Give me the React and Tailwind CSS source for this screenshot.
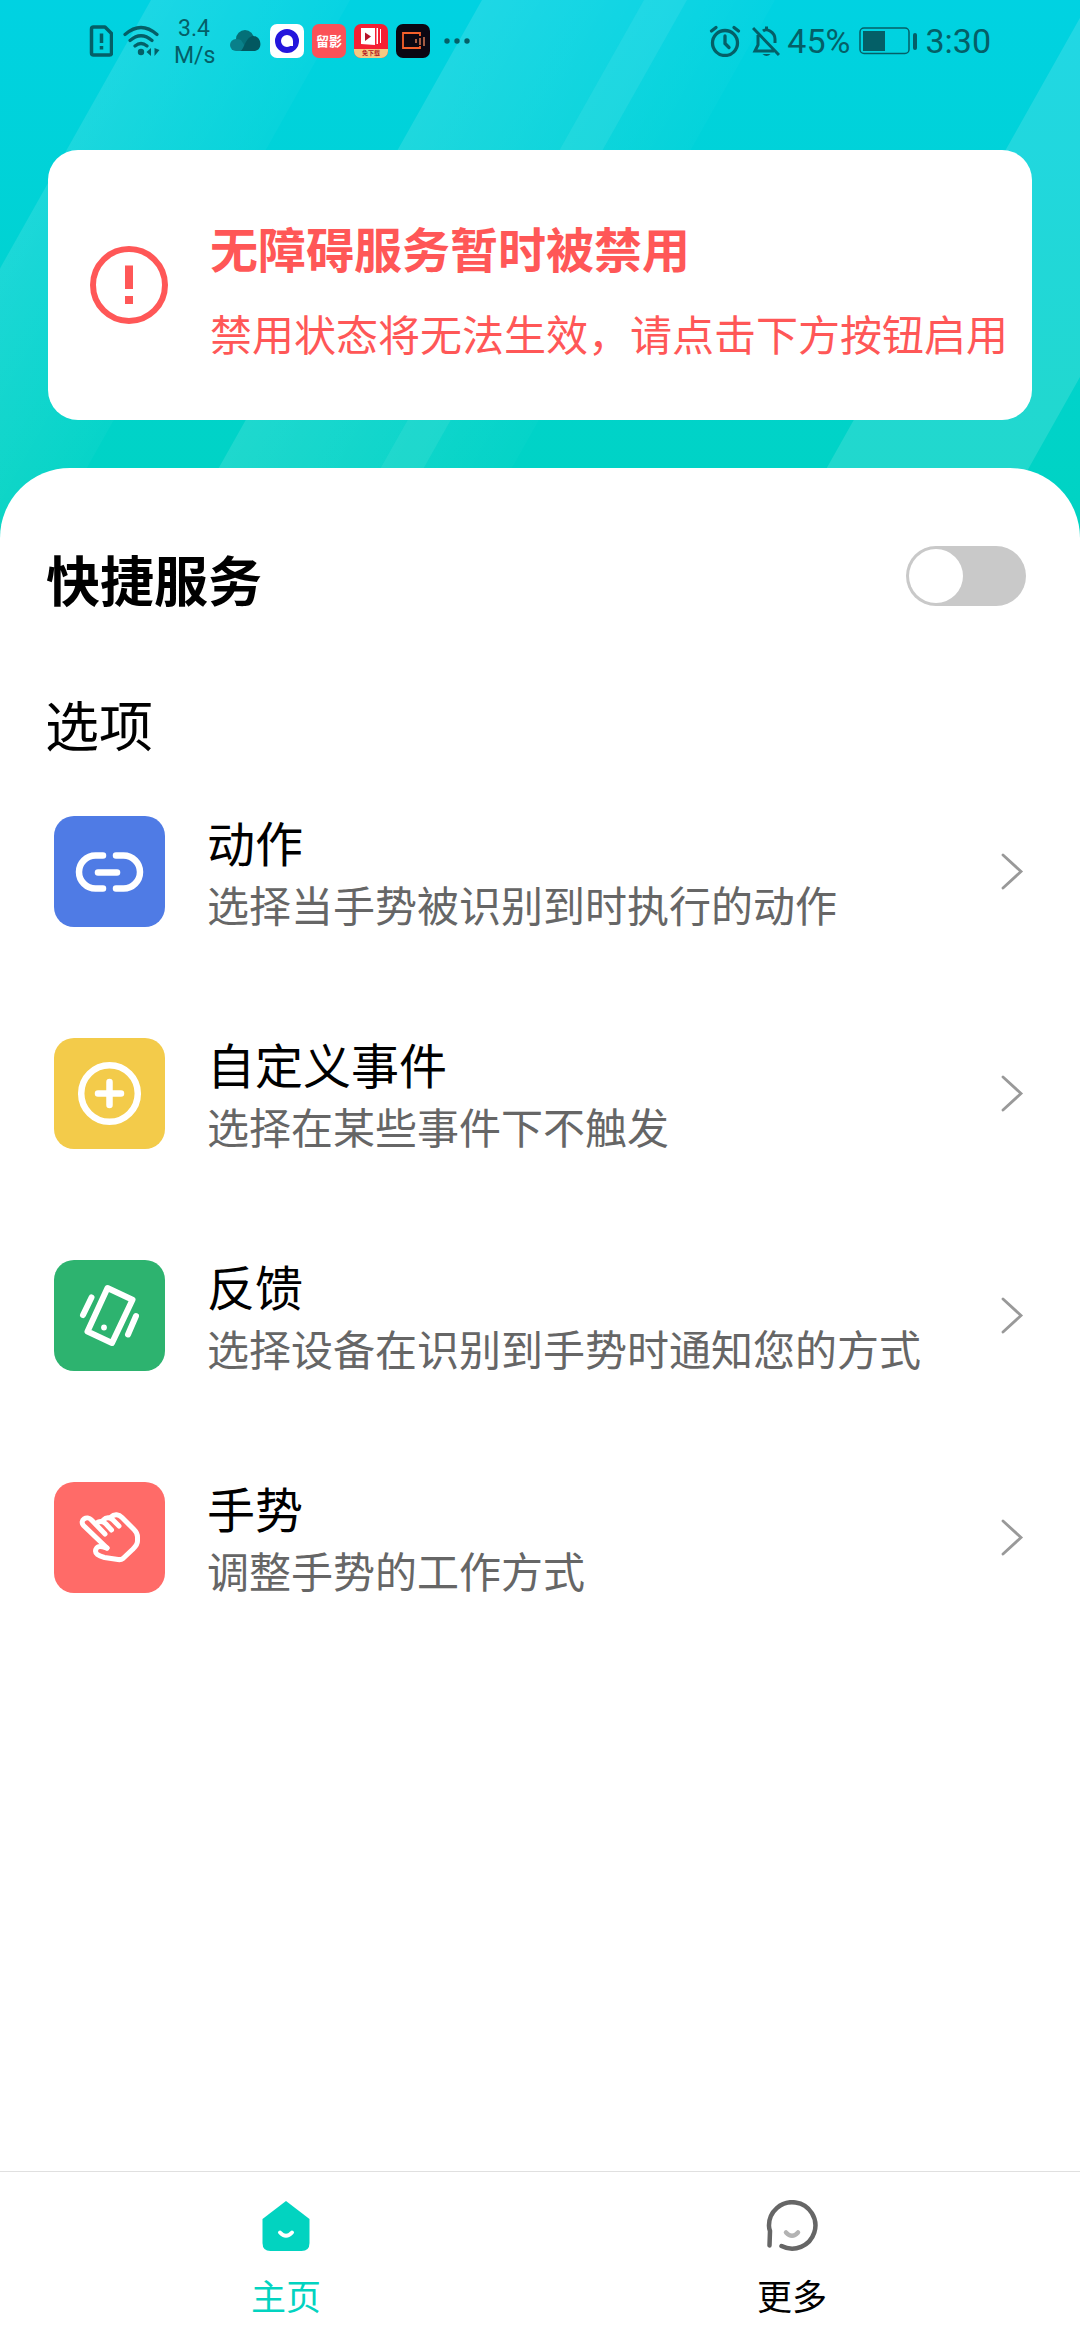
import { useState } from 'react';

const options = [
  { title: '动作', desc: '选择当手势被识别到时执行的动作', color: 'bg-[#4f7be5]', icon: LinkIcon },
  { title: '自定义事件', desc: '选择在某些事件下不触发', color: 'bg-[#f3cb4a]', icon: PlusIcon },
  { title: '反馈', desc: '选择设备在识别到手势时通知您的方式', color: 'bg-[#2db36f]', icon: VibrateIcon },
  { title: '手势', desc: '调整手势的工作方式', color: 'bg-[#ff6b68]', icon: HandIcon },
];

function LinkIcon() {
  return (
    <svg viewBox="0 0 111 111" className="size-full" fill="none" stroke="white" strokeWidth="6.5" strokeLinecap="round">
      <path d="M49 39.5H41.5a16.5 16.5 0 0 0 0 33H49" />
      <path d="M62 39.5H69.500a16.500 16.500 0 0 1 0 33H62" />
      <path d="M44 56.5H63" />
    </svg>
  );
}

function PlusIcon() {
  return (
    <svg viewBox="0 0 111 111" className="size-full" fill="none" stroke="white" strokeWidth="6.5" strokeLinecap="round">
      <circle cx="55.5" cy="55.5" r="28.3" />
      <path d="M44 55.5H67M55.5 44V67" />
    </svg>
  );
}

function VibrateIcon() {
  return (
    <svg viewBox="0 0 111 111" className="size-full" fill="none" stroke="white" strokeWidth="6" strokeLinecap="round" strokeLinejoin="round">
      <path d="M53.5 28L78.5 39.7L58 83L33.5 71.5Z" />
      <path d="M37.5 37.5L29 55M82 56L74 74.5" />
      <circle cx="50" cy="67.5" r="2.9" fill="white" stroke="none" />
    </svg>
  );
}

function HandIcon() {
  return (
    <svg viewBox="0 0 111 111" className="size-full" fill="none" stroke="white" strokeWidth="5" strokeLinecap="round" strokeLinejoin="round">
      <path d="M53 66L29.5 43.5C25 38 33 33 37.5 38L51 52" />
      <path d="M42 42C45 38.500 49 39 52 42L57.500 48" />
      <path d="M49.500 38C52.500 34.500 56.500 35.500 59 38L65 44" />
      <path d="M57 35C60.500 31.500 65 32.500 68 35.500L80 47.500Q83.500 51 83.500 55V59C83.500 63 81 65 78.500 67.500L69 76.500Q67 78 64 77.500L50.500 75.500C45 74 40 72 42 67C44 63 48 64.500 53 66" />
    </svg>
  );
}

function StatusBar() {
  return (
    <div className="flex h-20 items-center justify-between pl-[89px] pr-[89px] font-['Roboto'] text-[#045f67]">
      <div className="flex items-center pt-px">
        <svg className="h-8 w-6" viewBox="0 0 24 32" fill="none" stroke="currentColor" strokeWidth="3.5" strokeLinejoin="round">
          <path d="M4.5 2H16L22.5 8.500V28Q22.5 30 20.5 30H4.5Q2.5 30 2.5 28V4Q2.5 2 4.5 2Z" />
          <path d="M12.5 8.500V18M12.5 21V24.500" />
        </svg>
        <svg className="ml-[10px] h-8 w-[37px]" viewBox="0 0 37 32" fill="none" stroke="currentColor" strokeWidth="3.2" strokeLinecap="round">
          <path d="M2 9.5Q18 -4.5 34 9.5M7 15.500Q18 6 29 15.500M12 21Q18 16 24 21" />
          <circle cx="18" cy="27" r="3.2" fill="currentColor" stroke="none" />
          <path d="M28 23V31L23.5 27ZM31.5 23V31L36.5 25Z" fill="currentColor" stroke="none" />
        </svg>
        <div className="ml-[14px] w-10 pt-[3px] text-center text-[23px] leading-[27px]">
          <div>3.4</div>
          <div>M/s</div>
        </div>
        <svg className="ml-4 h-[22px] w-[31px]" viewBox="0 0 31 22">
          <circle cx="15" cy="9" r="9" fill="#047078" />
          <path d="M6 9a6 6 0 0 0 0 12H18L11 10Q9 9 6 9Z" fill="#09808a" />
          <path d="M10 21C14 21 15 7 23 6C32 6 33 20 25 21Z" fill="#025860" />
        </svg>
        <svg className="ml-[9px] size-[34px]" viewBox="0 0 34 34">
          <rect width="34" height="34" rx="7" fill="white" />
          <circle cx="17" cy="17" r="9" fill="none" stroke="#2416dc" strokeWidth="6" />
          <path d="M18 17H23V22H20Z" fill="white" />
        </svg>
        <div className="ml-2 flex size-[34px] items-center justify-center whitespace-nowrap rounded-[7px] bg-[#fb5157] font-['Noto_Sans_CJK_SC'] text-[13px] font-bold leading-none text-white">
          留影
        </div>
        <div className="ml-2 flex size-[34px] flex-col overflow-hidden rounded-[7px] bg-[#f51f32]">
          <svg className="h-[25px] w-[34px]" viewBox="0 0 34 25">
            <path d="M7 4H21V21L7 20ZM22.500 4H24V20H22.500ZM26 5H27V19H26Z" fill="white" />
            <path d="M11 8.500L17 12.500L11 17Z" fill="#b5132a" />
          </svg>
          <div className="h-[9px] bg-[#f4c982] text-center font-['Noto_Sans_CJK_SC'] text-[6px] font-bold leading-[8px] text-[#b51824]">
            免下载
          </div>
        </div>
        <svg className="ml-2 size-[34px]" viewBox="0 0 34 34" fill="none">
          <rect width="34" height="34" rx="7" fill="#0b0712" />
          <path d="M24 12V9H7V24H24V22" stroke="#f4602b" strokeWidth="1.8" />
          <path d="M20 15V19M24 14V21M28 13V22" stroke="#c9714f" strokeWidth="1.6" />
        </svg>
        <svg className="ml-[13px] h-2 w-7" viewBox="0 0 28 8" fill="currentColor">
          <circle cx="4" cy="4" r="2.7" />
          <circle cx="14" cy="4" r="2.7" />
          <circle cx="24" cy="4" r="2.7" />
        </svg>
      </div>
      <div className="flex items-center pt-px text-[34px] leading-10">
        <svg className="h-8 w-8" viewBox="0 0 32 32" fill="none" stroke="currentColor" strokeWidth="3.3" strokeLinecap="round">
          <circle cx="16" cy="18" r="12.5" />
          <path d="M16 11V18.500L20 22.500M2.5 6L7 2.5M29.5 6L25 2.5" />
        </svg>
        <svg className="ml-[11px] h-8 w-7" viewBox="0 0 28 32" fill="none" stroke="currentColor" strokeWidth="3">
          <path d="M6 10V20L3 26H22M11 6Q14 3.5 18 6Q23 9 23 14V18M14.5 5V1.5M1 3L27 30" />
          <path d="M10.5 29H18.5Q14.5 33 10.5 29Z" fill="currentColor" stroke="none" />
        </svg>
        <span className="ml-[7px] pt-px">45%</span>
        <svg className="ml-[9px] h-7 w-[59px]" viewBox="0 0 59 28" fill="currentColor">
          <rect x="1" y="1" width="49" height="25.5" rx="4" fill="none" stroke="currentColor" strokeWidth="1.5" />
          <rect x="4" y="4" width="22" height="20" />
          <rect x="54" y="6" width="4" height="17" rx="2" />
        </svg>
        <span className="ml-[7px] pt-px">3:30</span>
      </div>
    </div>
  );
}

function Stripes() {
  return (
    <svg className="absolute inset-0 h-[560px] w-[1080px]" viewBox="0 0 1080 560" fill="white">
      <defs>
        <linearGradient id="fade" x1="0" y1="0" x2="0" y2="1">
          <stop offset="0" stopColor="white" stopOpacity="0.1" />
          <stop offset="0.35" stopColor="white" stopOpacity="0.03" />
          <stop offset="0.6" stopColor="white" stopOpacity="0.06" />
          <stop offset="1" stopColor="white" stopOpacity="0.1" />
        </linearGradient>
        <linearGradient id="beam" gradientUnits="userSpaceOnUse" x1="482" y1="0" x2="775" y2="0" gradientTransform="skewX(-29.4)">
          <stop offset="0" stopColor="white" stopOpacity="0.12" />
          <stop offset="1" stopColor="white" stopOpacity="0.02" />
        </linearGradient>
        <linearGradient id="edge" gradientUnits="userSpaceOnUse" x1="151" y1="0" x2="350" y2="0" gradientTransform="skewX(-29.4)">
          <stop offset="0" stopColor="white" stopOpacity="0.11" />
          <stop offset="1" stopColor="white" stopOpacity="0.03" />
        </linearGradient>
      </defs>
      <path d="M151 0H350L35 560H-164Z" fill="url(#edge)" />
      <path d="M482 0H775L460 560H167Z" fill="url(#beam)" />
      <path d="M644 0H687L372 560H329Z" fillOpacity="0.07" />
      <path d="M1090 0H1292L977 560H775Z" fillOpacity="0.13" />
    </svg>
  );
}

function AlertCard() {
  return (
    <div className="mx-12 flex h-[270px] items-center rounded-[30px] bg-white text-[#ff5757]">
      <svg className="ml-[42px] size-[78px] shrink-0" viewBox="0 0 78 78" fill="none" stroke="currentColor">
        <circle cx="39" cy="39" r="36" strokeWidth="6" />
        <path d="M39 19.5V43M39 50V58" strokeWidth="8" />
      </svg>
      <div className="ml-[42px] whitespace-nowrap pt-1.5">
        <div className="text-[48px] font-bold leading-[70px]">无障碍服务暂时被禁用</div>
        <div className="mt-5 text-[42px] leading-[62px]">禁用状态将无法生效，请点击下方按钮启用</div>
      </div>
    </div>
  );
}

function OptionRow({ option }) {
  const Icon = option.icon;

  return (
    <div className="flex h-[222px] items-start pl-[54px] pr-[56px]">
      <div className={`size-[111px] shrink-0 overflow-hidden rounded-[20px] ${option.color}`}>
        <Icon />
      </div>
      <div className="ml-[42px] flex-1 whitespace-nowrap">
        <div className="-mt-2 text-[48px] leading-[66px] text-black">{option.title}</div>
        <div className="text-[42px] leading-[60px] text-[#666]">{option.desc}</div>
      </div>
      <svg className="mt-[37px] h-[37px] w-[24px]" viewBox="0 0 24 37" fill="none" stroke="#999" strokeWidth="2.8" strokeLinecap="round">
        <path d="M3 2L21 18.5L3 35" />
      </svg>
    </div>
  );
}

function NavBar() {
  return (
    <nav className="flex h-[169px] border-t border-[#e0e0e0] bg-white text-[35px] leading-[52px]">
      <div className="flex w-[572px] flex-col items-center pt-[28px] text-[#02d3c0]">
        <svg className="h-[52px] w-12" viewBox="0 0 48 52">
          <path d="M24 1L47.500 19V43Q47.500 51 39.500 51H8.500Q0.500 51 0.500 43V19Z" fill="currentColor" />
          <path d="M18 32.5Q24 39 30 32.5" fill="none" stroke="white" strokeWidth="4" strokeLinecap="round" />
        </svg>
        <span className="mt-[17px]">主页</span>
      </div>
      <div className="flex w-[440px] flex-col items-center pt-[28px] text-black">
        <svg className="h-[52px] w-[52px]" viewBox="0 0 52 52" fill="none" stroke="#666" strokeWidth="4.5" strokeLinecap="round">
          <path d="M3.500 45.500L4 31Q3 28 3 26A23.200 23.200 0 1 1 15.500 46" />
          <path d="M20 32.5Q26 39 32 32.5" stroke="#b3b3b3" />
        </svg>
        <span className="mt-[17px]">更多</span>
      </div>
    </nav>
  );
}

export default function App() {
  const [enabled, setEnabled] = useState(false);

  return (
    <div className="relative h-[2340px] w-[1080px] overflow-hidden bg-linear-to-b from-[#00d2e2] from-0% to-[#00d3c0] to-24% font-['Noto_Sans_CJK_SC',sans-serif]">
      <Stripes />
      <div className="relative flex h-full flex-col">
        <StatusBar />
        <div className="h-[70px]" />
        <AlertCard />
        <main className="mt-12 flex flex-1 flex-col rounded-t-[70px] bg-white pt-[78px]">
          <div className="flex items-start justify-between pl-[46px] pr-[54px]">
            <h1 className="-mt-1 text-[54px] font-bold leading-[74px]">快捷服务</h1>
            <button
              className={`flex h-[60px] w-[120px] rounded-full p-[3px] ${enabled ? 'justify-end bg-[#02d3c0]' : 'bg-[#c9c9c9]'}`}
              onClick={() => setEnabled(!enabled)}
            >
              <span className="size-[54px] rounded-full bg-white" />
            </button>
          </div>
          <h2 className="mt-[71px] pl-[45px] text-[54px] leading-[74px]">选项</h2>
          <div className="mt-[55px]">
            {options.map((option) => (
              <OptionRow key={option.title} option={option} />
            ))}
          </div>
        </main>
        <NavBar />
      </div>
    </div>
  );
}
